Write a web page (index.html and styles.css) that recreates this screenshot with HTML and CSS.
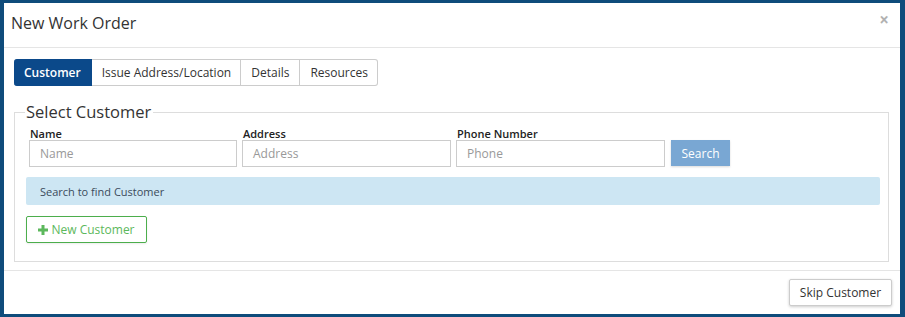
FILE: index.html
```html
<!DOCTYPE html>
<html>
<head>
<meta charset="utf-8">
<link rel="stylesheet" href="styles.css">
</head>
<body>
<div class="modal">
  <div class="modal-header">
    <h4 class="title">New Work Order</h4>
    <span class="close">×</span>
  </div>
  <div class="modal-body">
    <div class="tabs">
      <span class="tab active">Customer</span>
      <span class="tab">Issue Address/Location</span>
      <span class="tab">Details</span>
      <span class="tab">Resources</span>
    </div>
    <fieldset class="panel">
      <legend>Select Customer</legend>
      <div class="search-row">
        <div class="field f-name">
          <label>Name</label>
          <div class="input">Name</div>
        </div>
        <div class="field f-addr">
          <label>Address</label>
          <div class="input">Address</div>
        </div>
        <div class="field f-phone">
          <label>Phone Number</label>
          <div class="input">Phone</div>
        </div>
        <button class="btn-search">Search</button>
      </div>
      <div class="info">Search to find Customer</div>
      <button class="btn-new"><svg class="plus" viewBox="0 0 10 10" width="10" height="10"><path d="M3.5 0h3v3.5H10v3H6.5V10h-3V6.5H0v-3h3.5z" fill="#5cb85c"/></svg>New Customer</button>
    </fieldset>
  </div>
  <div class="modal-footer">
    <button class="btn-skip">Skip Customer</button>
  </div>
</div>
</body>
</html>
```
FILE: styles.css
```css
html, body {
  margin: 0;
  padding: 0;
}
body {
  background: #0f4c7b;
  padding: 3px 5px 3px 4px;
  font-family: "Open Sans", "Noto Sans", sans-serif;
  color: #333;
}
.modal {
  background: #fff;
  width: 896px;
  height: 311px;
  display: flex;
  flex-direction: column;
}
.modal-header {
  height: 44px;
  border-bottom: 1px solid #e5e5e5;
  display: flex;
  align-items: center;
  justify-content: space-between;
  padding: 0 11px 0 7px;
}
.title {
  margin: 0;
  font-size: 16px;
  font-weight: 400;
  color: #333;
  position: relative;
  top: -2px;
}
.close {
  font-size: 17px;
  font-weight: 700;
  color: #000;
  opacity: 0.3;
  position: relative;
  top: -6px;
  line-height: 1;
}
.modal-body {
  padding: 11px 11px 7px 10px;
  flex: 1;
}
.tabs {
  display: flex;
  height: 27px;
  font-size: 12px;
}
.tab {
  border: 1px solid #ccc;
  border-left: none;
  display: flex;
  align-items: center;
  padding: 0 10px;
  color: #333;
  background: #fff;
}
.tab.active {
  background: #0b498a;
  border-color: #0b498a;
  color: #fff;
  font-weight: 600;
  border-radius: 3px 0 0 3px;
  padding: 0 10px;
}
.tab:nth-child(2) {
  padding: 0 9px 0 10px;
}
.tab:last-child {
  border-radius: 0 3px 3px 0;
  padding: 0 9px 0 10px;
}
.panel {
  margin: 15px 0 0 0;
  border: 1px solid #ddd;
  padding: 4px 8px 18px 11px;
}
.panel legend {
  font-size: 16.5px;
  line-height: 22px;
  padding: 0 2px 0 1px;
  margin-left: -1px;
  color: #333;
}
.search-row {
  display: flex;
  align-items: flex-end;
  gap: 5px;
  padding-left: 3px;
}
.field label {
  display: block;
  font-size: 11px;
  font-weight: 600;
  line-height: 13px;
  color: #222;
  padding-left: 1px;
}
.f-name { width: 208px; }
.f-addr { width: 209px; }
.f-phone { width: 209px; }
.input {
  box-sizing: border-box;
  height: 27px;
  border: 1px solid #ccc;
  font-size: 12px;
  color: #999;
  padding: 0 10px;
  display: flex;
  align-items: center;
}
.btn-search {
  margin: 0 0 1px 1px;
  width: 59px;
  height: 26px;
  background: #79a7d3;
  border: 1px solid #79a7d3;
  color: #fff;
  font-family: inherit;
  font-size: 12px;
  padding: 0;
  box-shadow: 0 1px 2px rgba(0,0,0,0.15);
}
.info {
  margin-top: 10px;
  height: 28px;
  background: #cde6f3;
  border-radius: 2px;
  font-size: 11px;
  color: #3b4b5b;
  display: flex;
  align-items: center;
  padding-left: 14px;
}
.btn-new {
  margin-top: 11px;
  height: 27px;
  width: 121px;
  background: #fff;
  border: 1px solid #4cae4c;
  border-radius: 2px;
  color: #5cb85c;
  font-family: inherit;
  font-size: 12px;
  display: flex;
  align-items: center;
  justify-content: center;
  gap: 3px;
  padding: 0;
  box-shadow: 0 1px 2px rgba(0,0,0,0.08);
}
.plus {
  display: block;
}
.modal-footer {
  border-top: 1px solid #e5e5e5;
  padding: 8px 8px 8px 0;
  display: flex;
  justify-content: flex-end;
}
.btn-skip {
  height: 27px;
  width: 103px;
  background: #fff;
  border: 1px solid #ccc;
  border-radius: 2px;
  color: #333;
  font-family: inherit;
  font-size: 12px;
  padding: 0;
  box-shadow: 0 1px 3px rgba(0,0,0,0.2);
}
```
